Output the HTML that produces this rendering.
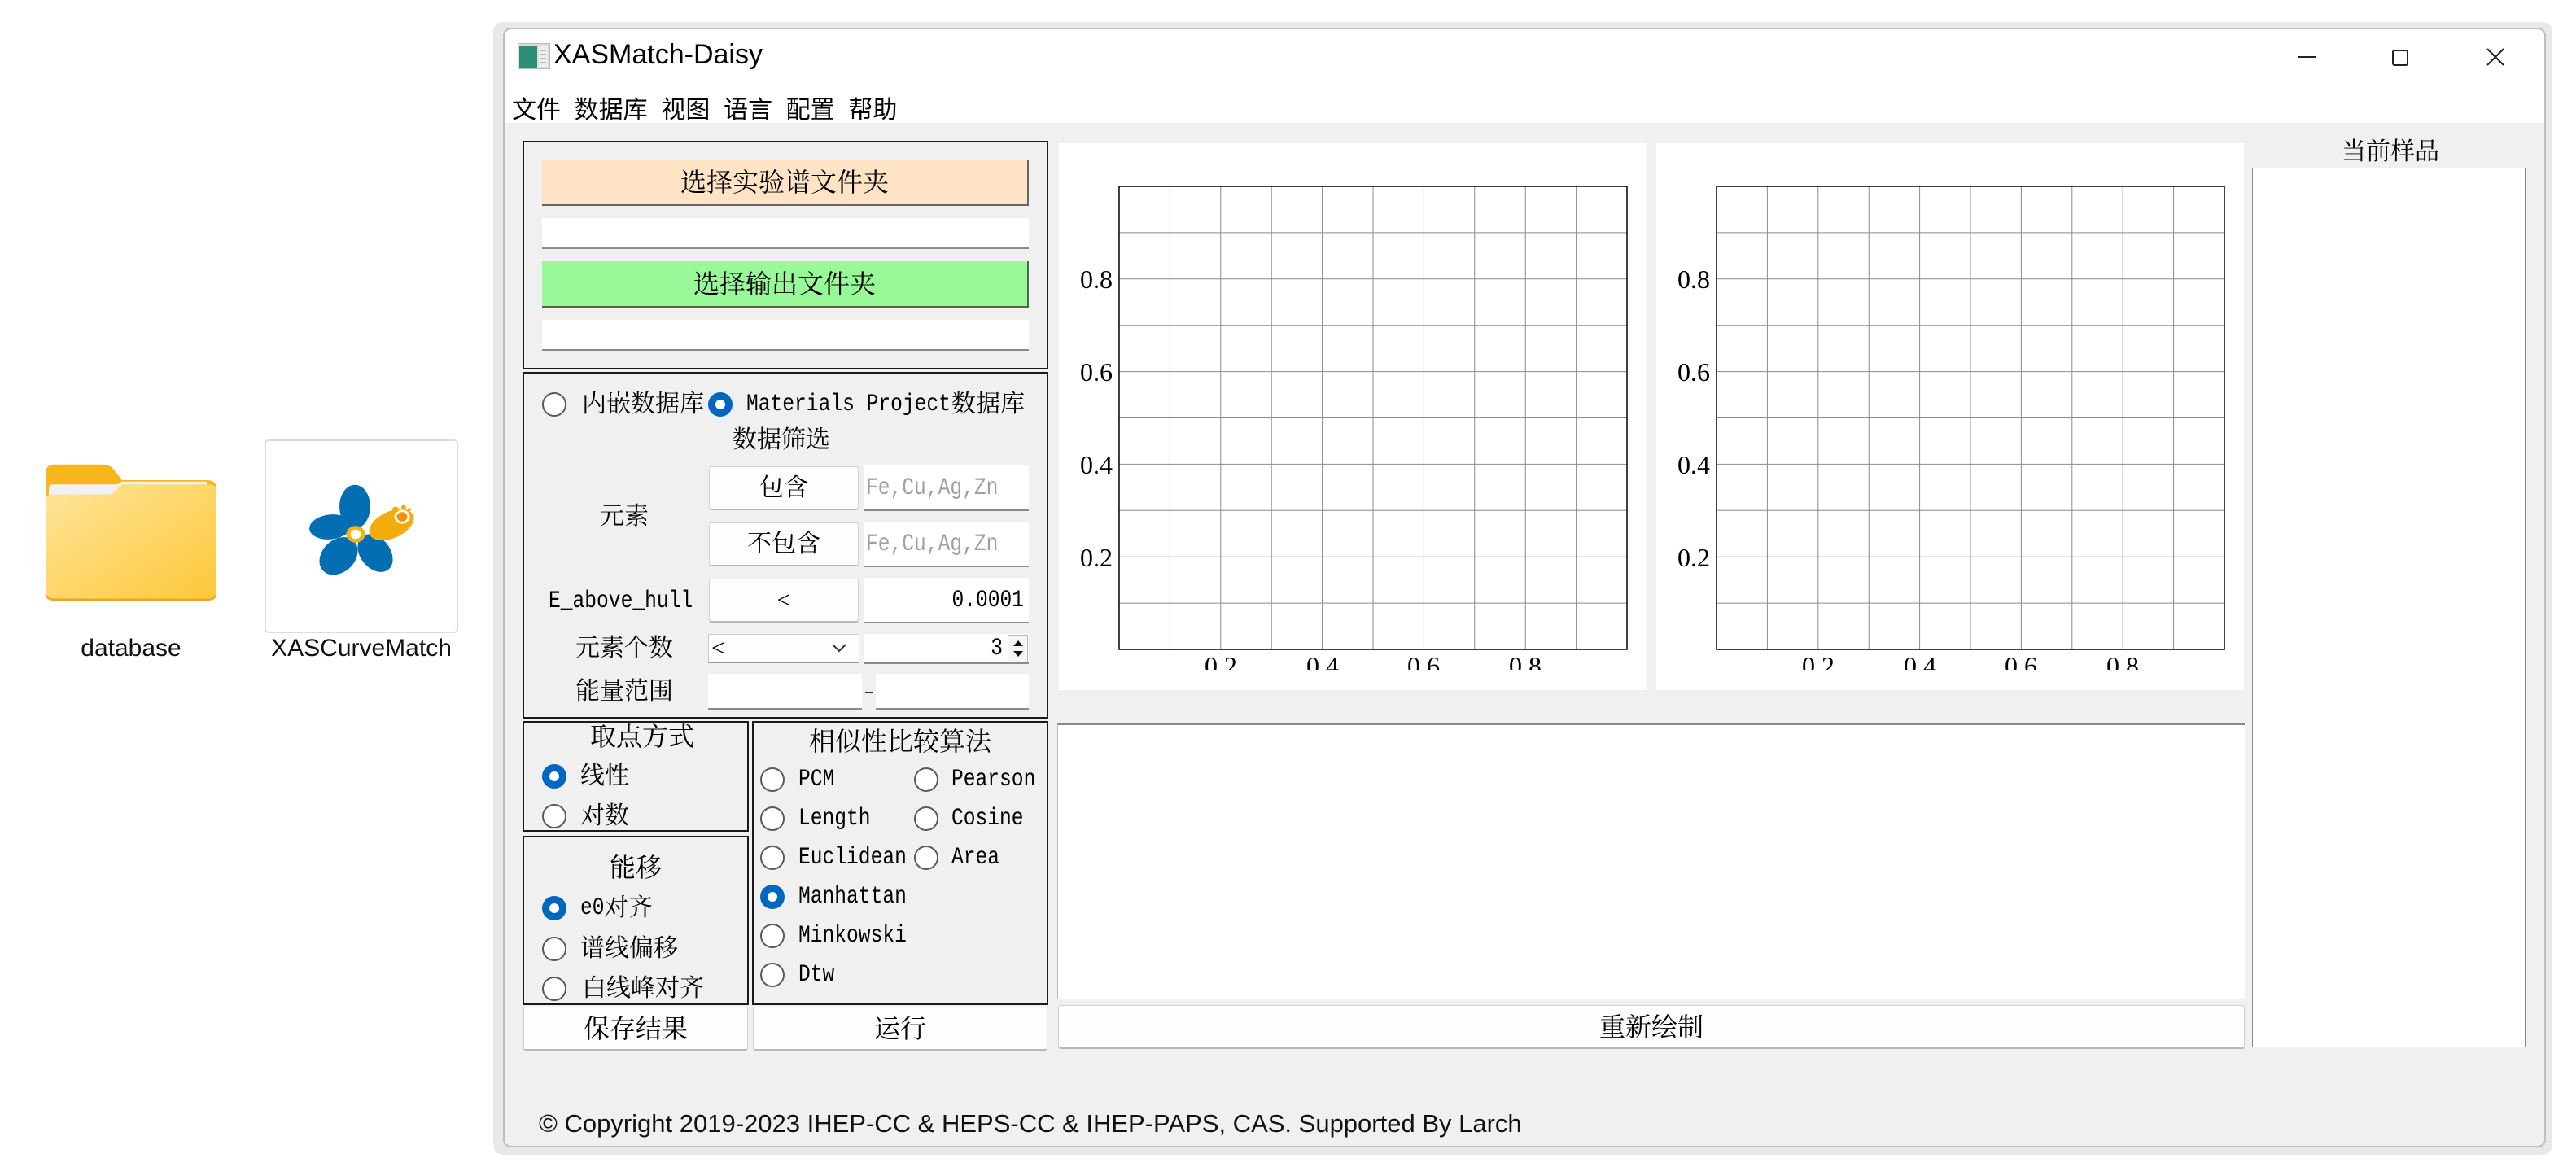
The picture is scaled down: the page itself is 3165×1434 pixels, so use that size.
<!DOCTYPE html>
<html><head><meta charset="utf-8">
<style>
*{box-sizing:border-box;margin:0;padding:0}
body{width:3165px;height:1434px;background:#fff;position:relative;overflow:hidden;font-family:"Liberation Serif","Noto Serif CJK SC",serif;color:#000}
.a{position:absolute}
.cj{font-family:"Liberation Serif","Noto Serif CJK SC",serif;font-size:30px;line-height:1;white-space:nowrap}
.m{font-family:"Liberation Mono","Noto Serif CJK SC",monospace;font-size:30px;line-height:1;white-space:nowrap;display:inline-block;transform:scaleX(.82);transform-origin:left center}
.m.rt{transform-origin:right center}
.grp{position:absolute;border:2px solid #1a1a1a}
.inp{position:absolute;background:#fff;border-bottom:2px solid #8a8a8a}
.btn{position:absolute;background:#fdfdfd;border:1px solid #d0d0d0;border-bottom:2px solid #b8b8b8;border-radius:3px;display:flex;align-items:center;justify-content:center}
.r{position:absolute;width:30px;height:30px;border-radius:50%;border:2px solid #5a5a5a;background:#fff}
.r.on{border:none;background:#0067c0}
.r.on::after{content:"";position:absolute;left:9px;top:9px;width:12px;height:12px;border-radius:50%;background:#fff}
.c{transform:translate(-50%,-50%)}
.ui{font-family:"Liberation Sans","Noto Sans CJK SC",sans-serif}
</style></head><body>

<!-- desktop icons -->
<svg class="a" style="left:54px;top:569px" width="214" height="170" viewBox="0 0 214 194" preserveAspectRatio="none">
<defs><linearGradient id="fg" x1="0" y1="0" x2="1" y2="1"><stop offset="0" stop-color="#fee59a"/><stop offset="1" stop-color="#fdc83a"/></linearGradient></defs>
<path d="M2 14 Q2 2 14 2 H72 Q80 2 85 8 L96 24 H200 Q212 24 212 36 V120 H2 Z" fill="#f8b61d"/>
<path d="M6 34 Q6 30 12 30 H90 L96 26 H200 V90 H6 Z" fill="#f1f1f1"/>
<path d="M2 52 Q2 44 10 44 H82 L96 30 H202 Q212 30 212 40 V178 Q212 190 200 190 H14 Q2 190 2 178 Z" fill="url(#fg)"/>
<path d="M2 178 Q2 190 14 190 H200 Q212 190 212 178 V184 Q212 193 200 193 H14 Q2 193 2 184 Z" fill="#e8a724"/>
</svg>
<div class="a ui" style="left:54px;top:780px;width:214px;text-align:center;font-size:30px;color:#111">database</div>

<div class="a" style="left:325px;top:540px;width:238px;height:238px;border:2px solid #dcdcdc;border-radius:5px;background:#fff"></div>
<svg class="a" style="left:370px;top:585px" width="140" height="125" viewBox="0 0 140 140" preserveAspectRatio="none">
<g fill="#046eb5">
<ellipse cx="66" cy="42" rx="19" ry="30"/>
<ellipse cx="36" cy="70" rx="26" ry="17" transform="rotate(-8 36 70)"/>
<ellipse cx="46" cy="110" rx="21" ry="28" transform="rotate(35 46 110)"/>
<ellipse cx="91" cy="106" rx="19" ry="28" transform="rotate(-30 91 106)"/>
</g>
<ellipse cx="111" cy="67" rx="30" ry="18" transform="rotate(-30 111 67)" fill="#f4ab0c"/>
<circle cx="124" cy="56" r="8" fill="#ef9300" stroke="#fff" stroke-width="3"/>
<circle cx="116" cy="46" r="4" fill="#f4ab0c"/><circle cx="126" cy="43" r="3" fill="#f4ab0c"/><circle cx="133" cy="46" r="2" fill="#f4ab0c"/>
<circle cx="67" cy="80" r="9" fill="#fff" stroke="#f4b50c" stroke-width="5"/>
</svg>
<div class="a ui" style="left:310px;top:780px;width:268px;text-align:center;font-size:30px;color:#111">XASCurveMatch</div>

<!-- window -->
<div class="a" style="left:606px;top:27px;width:2530px;height:1392px;border-radius:12px;background:#d8d8d8;opacity:.6"></div>
<div class="a" style="left:618px;top:34px;width:2510px;height:1376px;border:2px solid #bdbdbd;border-radius:10px;background:#f0f0f0;overflow:hidden">
 <div class="a" style="left:0;top:0;width:2510px;height:115px;background:#fff"></div>
</div>
<!-- title -->
<svg class="a" style="left:636px;top:53px" width="40" height="32"><rect x="0" y="0" width="40" height="32" fill="#ddd" stroke="#999"/><rect x="2" y="3" width="22" height="27" fill="#2e8d77"/><rect x="26" y="4" width="11" height="25" fill="#eee"/><path d="M28 9h7M28 14h7M28 19h7M28 24h7" stroke="#888"/></svg>
<div class="a ui" style="left:680px;top:48px;font-size:34px">XASMatch-Daisy</div>
<div class="a" style="left:2824px;top:69px;width:21px;height:2px;background:#222"></div>
<div class="a" style="left:2939px;top:61px;width:20px;height:20px;border:2px solid #222;border-radius:3px"></div>
<svg class="a" style="left:3054px;top:58px" width="24" height="24"><path d="M2 2L22 22M22 2L2 22" stroke="#222" stroke-width="2"/></svg>
<!-- menu -->
<div class="a ui" style="left:629px;top:110px;font-size:30px">文件&nbsp;&nbsp;数据库&nbsp;&nbsp;视图&nbsp;&nbsp;语言&nbsp;&nbsp;配置&nbsp;&nbsp;帮助</div>

<!-- group 1 -->
<div class="grp" style="left:642px;top:173px;width:646px;height:281px"></div>
<div class="a cj" style="left:666px;top:196px;width:598px;height:57px;background:#fee3c4;border-right:2px solid #666;border-bottom:2px solid #666;display:flex;align-items:center;justify-content:center;font-size:32px">选择实验谱文件夹</div>
<div class="inp" style="left:666px;top:268px;width:598px;height:38px"></div>
<div class="a cj" style="left:666px;top:321px;width:598px;height:57px;background:#98f998;border-right:2px solid #4a6a4a;border-bottom:2px solid #4a6a4a;display:flex;align-items:center;justify-content:center;font-size:32px">选择输出文件夹</div>
<div class="inp" style="left:666px;top:393px;width:598px;height:38px"></div>

<!-- group 2 -->
<div class="grp" style="left:642px;top:457px;width:646px;height:426px"></div>
<div class="r c" style="left:681px;top:497px"></div>
<div class="a cj" style="left:715px;top:482px">内嵌数据库</div>
<div class="r on c" style="left:885px;top:497px"></div>
<div class="a m" style="left:917px;top:482px">Materials Project</div>
<div class="a cj" style="left:1169px;top:482px">数据库</div>
<div class="a cj" style="left:900px;top:526px">数据筛选</div>
<div class="a cj" style="left:737px;top:620px">元素</div>
<div class="btn cj" style="left:871px;top:573px;width:184px;height:54px">包含</div>
<div class="inp" style="left:1061px;top:572px;width:203px;height:56px;color:#a0a0a0;padding:13px 0 0 3px"><span class="m">Fe,Cu,Ag,Zn</span></div>
<div class="btn cj" style="left:871px;top:642px;width:184px;height:54px">不包含</div>
<div class="inp" style="left:1061px;top:641px;width:203px;height:56px;color:#a0a0a0;padding:13px 0 0 3px"><span class="m">Fe,Cu,Ag,Zn</span></div>
<div class="a m" style="left:674px;top:724px">E_above_hull</div>
<div class="btn cj" style="left:871px;top:711px;width:184px;height:54px">&lt;</div>
<div class="inp" style="left:1061px;top:710px;width:203px;height:56px;text-align:right;padding:13px 6px 0 0"><span class="m rt">0.0001</span></div>
<div class="a cj" style="left:707px;top:782px">元素个数</div>
<div class="a" style="left:870px;top:779px;width:186px;height:36px;background:#fdfdfd;border:1px solid #ccc;border-bottom:2px solid #999"></div>
<div class="a cj" style="left:874px;top:782px">&lt;</div>
<svg class="a" style="left:1022px;top:790px" width="18" height="12"><path d="M1 2L9 10L17 2" fill="none" stroke="#333" stroke-width="2"/></svg>
<div class="inp" style="left:1061px;top:779px;width:203px;height:37px;text-align:right;padding:3px 32px 0 0"><span class="m rt">3</span></div>
<div class="a" style="left:1238px;top:780px;width:25px;height:34px;border:1px solid #bbb;background:#f6f6f6"></div>
<svg class="a" style="left:1240px;top:782px" width="22" height="30"><path d="M5 12L11 5L17 12Z M5 18L11 25L17 18Z" fill="#111"/></svg>
<div class="a cj" style="left:707px;top:835px">能量范围</div>
<div class="inp" style="left:870px;top:828px;width:189px;height:44px"></div>
<div class="a" style="left:1063px;top:850px;width:10px;height:2px;background:#333"></div>
<div class="inp" style="left:1076px;top:828px;width:188px;height:44px"></div>

<!-- group 3 -->
<div class="grp" style="left:642px;top:886px;width:278px;height:136px"></div>
<div class="a cj" style="left:789px;top:905px;transform:translate(-50%,-50%);font-size:32px">取点方式</div>
<div class="r on c" style="left:681px;top:954px"></div><div class="a cj" style="left:713px;top:939px">线性</div>
<div class="r c" style="left:681px;top:1003px"></div><div class="a cj" style="left:713px;top:988px">对数</div>

<div class="grp" style="left:642px;top:1027px;width:278px;height:208px"></div>
<div class="a cj" style="left:781px;top:1066px;transform:translate(-50%,-50%);font-size:32px">能移</div>
<div class="r on c" style="left:681px;top:1116px"></div><div class="a m" style="left:713px;top:1101px">e0</div><div class="a cj" style="left:742px;top:1101px">对齐</div>
<div class="r c" style="left:681px;top:1166px"></div><div class="a cj" style="left:713px;top:1151px">谱线偏移</div>
<div class="r c" style="left:681px;top:1215px"></div><div class="a cj" style="left:715px;top:1200px">白线峰对齐</div>

<div class="grp" style="left:924px;top:886px;width:364px;height:349px"></div>
<div class="a cj" style="left:1106px;top:911px;transform:translate(-50%,-50%);font-size:32px">相似性比较算法</div>
<div class="r c" style="left:949px;top:958px"></div><div class="a m" style="left:981px;top:943px">PCM</div>
<div class="r c" style="left:1138px;top:958px"></div><div class="a m" style="left:1169px;top:943px">Pearson</div>
<div class="r c" style="left:949px;top:1006px"></div><div class="a m" style="left:981px;top:991px">Length</div>
<div class="r c" style="left:1138px;top:1006px"></div><div class="a m" style="left:1169px;top:991px">Cosine</div>
<div class="r c" style="left:949px;top:1054px"></div><div class="a m" style="left:981px;top:1039px">Euclidean</div>
<div class="r c" style="left:1138px;top:1054px"></div><div class="a m" style="left:1169px;top:1039px">Area</div>
<div class="r on c" style="left:949px;top:1102px"></div><div class="a m" style="left:981px;top:1087px">Manhattan</div>
<div class="r c" style="left:949px;top:1150px"></div><div class="a m" style="left:981px;top:1135px">Minkowski</div>
<div class="r c" style="left:949px;top:1198px"></div><div class="a m" style="left:981px;top:1183px">Dtw</div>

<div class="btn cj" style="left:643px;top:1237px;width:276px;height:54px;font-size:32px">保存结果</div>
<div class="btn cj" style="left:925px;top:1237px;width:362px;height:54px;font-size:32px">运行</div>
<div class="btn cj" style="left:1300px;top:1235px;width:1458px;height:54px;font-size:32px">重新绘制</div>

<!-- plots -->
<svg class="a" style="left:1301px;top:176px" width="722" height="672" font-family="Liberation Serif, Noto Serif CJK SC, serif" font-size="32">
<rect width="722" height="672" fill="#fff"/>
<g stroke="#8a8a8a" stroke-width="1">
<path d="M136.4 53V622M198.8 53V622M261.2 53V622M323.6 53V622M386 53V622M448.4 53V622M510.8 53V622M573.2 53V622M635.6 53V622"/>
<path d="M74 109.9H698M74 166.8H698M74 223.7H698M74 280.6H698M74 337.5H698M74 394.4H698M74 451.3H698M74 508.2H698M74 565.1H698"/>
</g>
<rect x="74" y="53" width="624" height="569" fill="none" stroke="#000" stroke-width="1.5"/>
<g text-anchor="end"><text x="66" y="178">0.8</text><text x="66" y="292">0.6</text><text x="66" y="406">0.4</text><text x="66" y="520">0.2</text></g>
<g text-anchor="middle"><text x="199" y="653">0.2</text><text x="324" y="653">0.4</text><text x="448" y="653">0.6</text><text x="573" y="653">0.8</text></g>
<rect y="647" width="722" height="25" fill="#fff"/>
</svg>
<svg class="a" style="left:2035px;top:176px" width="722" height="672" font-family="Liberation Serif, Noto Serif CJK SC, serif" font-size="32">
<rect width="722" height="672" fill="#fff"/>
<g stroke="#8a8a8a" stroke-width="1">
<path d="M136.4 53V622M198.8 53V622M261.2 53V622M323.6 53V622M386 53V622M448.4 53V622M510.8 53V622M573.2 53V622M635.6 53V622"/>
<path d="M74 109.9H698M74 166.8H698M74 223.7H698M74 280.6H698M74 337.5H698M74 394.4H698M74 451.3H698M74 508.2H698M74 565.1H698"/>
</g>
<rect x="74" y="53" width="624" height="569" fill="none" stroke="#000" stroke-width="1.5"/>
<g text-anchor="end"><text x="66" y="178">0.8</text><text x="66" y="292">0.6</text><text x="66" y="406">0.4</text><text x="66" y="520">0.2</text></g>
<g text-anchor="middle"><text x="199" y="653">0.2</text><text x="324" y="653">0.4</text><text x="448" y="653">0.6</text><text x="573" y="653">0.8</text></g>
<rect y="647" width="722" height="25" fill="#fff"/>
</svg>

<!-- results area -->
<div class="a" style="left:1299px;top:889px;width:1459px;height:338px;background:#fff;border-top:2px solid #8a8a8a;border-left:1px solid #bbb"></div>

<!-- right panel -->
<div class="a cj" style="left:2877px;top:172px">当前样品</div>
<div class="a" style="left:2767px;top:206px;width:336px;height:1081px;background:#fff;border:1px solid #888"></div>

<!-- copyright -->
<div class="a ui" style="left:662px;top:1363px;font-size:31px;color:#111">© Copyright 2019-2023 IHEP-CC &amp; HEPS-CC &amp; IHEP-PAPS, CAS. Supported By Larch</div>
</body></html>
